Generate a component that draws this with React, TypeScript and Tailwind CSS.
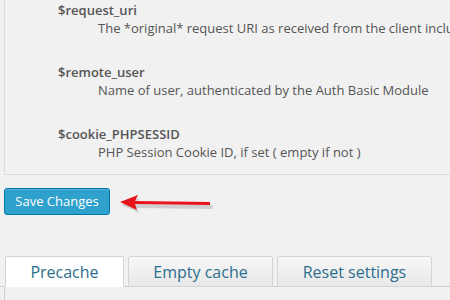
import React from "react";

const vars = [
  {
    name: "$request_uri",
    desc: "The *original* request URI as received from the client including the args",
  },
  {
    name: "$remote_user",
    desc: "Name of user, authenticated by the Auth Basic Module",
  },
  {
    name: "$cookie_PHPSESSID",
    desc: "PHP Session Cookie ID, if set ( empty if not )",
  },
];

const tabs = [
  { label: "Precache", width: "w-[119px]", active: true },
  { label: "Empty cache", width: "w-[145px]", active: false },
  { label: "Reset settings", width: "w-[155px]", active: false },
];

function Arrow() {
  return (
    <svg width="100" height="22" viewBox="0 0 100 22" className="ml-[8px] mt-[2px]">
      {/* shadow */}
      <g fill="#b9b9b9" opacity="0.6">
        <path d="M2 11 L20 4 L17 10 L93 11 L93 15 L17 14 L20 19 Z" transform="translate(1.5 2)" />
      </g>
      <path d="M2 10 L20 3 L17 9 L92 10 L92 13 L17 12 L19 18 Z" fill="#e8141b" />
    </svg>
  );
}

export default function App() {
  return (
    <div
      className="w-[450px] h-[300px] overflow-hidden bg-[#f1f1f1] text-[13px]"
      style={{ fontFamily: '"Open Sans", "Noto Sans", sans-serif' }}
    >
      {/* settings panel */}
      <div className="ml-[4px] h-[175px] border-l border-b border-[#dcdcdc] pl-[53px] pt-[1px]">
        {vars.map((v, i) => (
          <div key={v.name} className={i > 0 ? "mt-[26px]" : ""}>
            <div className="h-[18px] leading-[18px] font-semibold text-[#555] whitespace-nowrap">{v.name}</div>
            <div className="h-[18px] leading-[18px] pl-[40px] text-[#555] whitespace-nowrap">{v.desc}</div>
          </div>
        ))}
      </div>

      <div className="mt-[13px] ml-[4px] flex items-center">
        <button
          type="button"
          className="h-[27px] w-[106px] rounded-[3px] border border-[#0074a2] bg-[#2ea2cc] text-[13px] text-white shadow-[inset_0_1px_0_rgba(120,200,230,0.5)]"
        >
          Save Changes
        </button>
        <Arrow />
      </div>

      {/* tabs */}
      <div className="mt-[41px] flex gap-[4px] border-b border-[#cccccc] pl-[5px]">
        {tabs.map((t) => (
          <div
            key={t.label}
            className={
              "-mb-px flex h-[31px] items-center justify-center rounded-t-[2px] border border-[#d4d4d4] text-[16px] text-[#2c6e8e] " +
              t.width +
              (t.active ? " border-b-white bg-white" : " bg-linear-to-b from-[#f7f7f7] to-[#e8e8e8]")
            }
          >
            {t.label}
          </div>
        ))}
      </div>
      <div className="ml-[4px] h-[20px] border-l border-[#cccccc]" />
    </div>
  );
}
